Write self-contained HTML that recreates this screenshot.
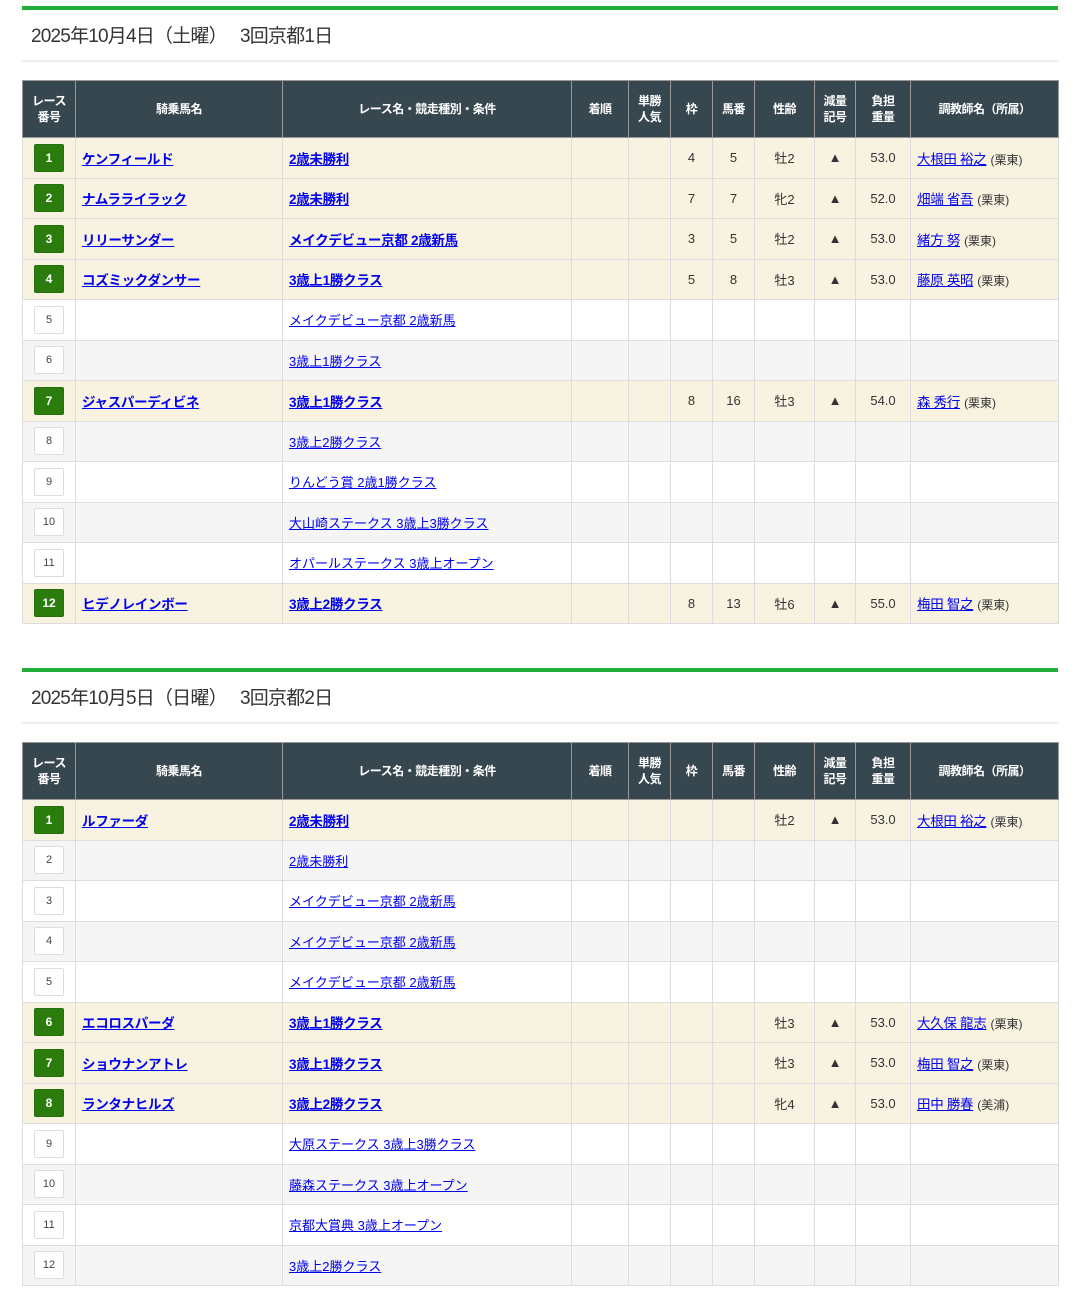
<!DOCTYPE html>
<html><head><meta charset="utf-8"><style>
*{box-sizing:border-box;margin:0;padding:0}
body{width:1080px;height:1292px;background:#fff;font-family:"Liberation Sans","Noto Sans CJK JP",sans-serif;color:#333;overflow:hidden}
.sec{margin:0 22px}
.bar{height:4px;background:#22ac38}
h2{font-size:19px;font-weight:normal;color:#333;height:52px;line-height:54px;padding-left:9px;border-bottom:2px solid #eee;letter-spacing:-0.8px}
table{border-collapse:collapse;width:1036px;table-layout:fixed;margin-top:18px}
th{background:#37474f;color:#fff;font-size:12px;font-weight:bold;height:57px;border:1px solid #999;line-height:16px;letter-spacing:-0.5px}
td{border:1px solid #ddd;height:40.5px;font-size:13px;text-align:center;padding:0}
td.l{text-align:left;padding-left:6px}
a{color:#0000ee;text-decoration:underline;font-size:13px}
tr.h a{font-weight:bold;font-size:13.5px;letter-spacing:-0.3px}
tr.h td{background:#f8f3e0}
tr.g td{background:#f5f5f5}
tr.w td{background:#fff}
.b{display:inline-block;width:30px;height:28px;line-height:26px;border:1px solid #ddd;background:#fff;font-size:11px;border-radius:2px;color:#444}
tr.h .b{background:#2a7d0c;border-color:#276f0e;color:#fff;font-weight:bold;font-size:12px}
.t a{font-size:13px;font-weight:normal!important}
.t span{font-size:12px;margin-left:4px}
</style></head><body>
<div style="height:6px"></div>
<div class="sec"><div class="bar"></div><h2>2025年10月4日（土曜）　 3回京都1日</h2>
<table><colgroup><col style="width:53px"><col style="width:207px"><col style="width:289px"><col style="width:57px"><col style="width:42px"><col style="width:42px"><col style="width:42px"><col style="width:60px"><col style="width:41px"><col style="width:55px"><col style="width:148px"></colgroup>
<tr><th>レース<br>番号</th><th>騎乗馬名</th><th>レース名・競走種別・条件</th><th>着順</th><th>単勝<br>人気</th><th>枠</th><th>馬番</th><th>性齢</th><th>減量<br>記号</th><th>負担<br>重量</th><th>調教師名（所属）</th></tr>
<tr class="h"><td><span class="b">1</span></td><td class="l"><a>ケンフィールド</a></td><td class="l"><a>2歳未勝利</a></td><td></td><td></td><td>4</td><td>5</td><td>牡2</td><td>▲</td><td>53.0</td><td class="l t"><a>大根田 裕之</a><span>(栗東)</span></td></tr>
<tr class="h"><td><span class="b">2</span></td><td class="l"><a>ナムラライラック</a></td><td class="l"><a>2歳未勝利</a></td><td></td><td></td><td>7</td><td>7</td><td>牝2</td><td>▲</td><td>52.0</td><td class="l t"><a>畑端 省吾</a><span>(栗東)</span></td></tr>
<tr class="h"><td><span class="b">3</span></td><td class="l"><a>リリーサンダー</a></td><td class="l"><a>メイクデビュー京都 2歳新馬</a></td><td></td><td></td><td>3</td><td>5</td><td>牡2</td><td>▲</td><td>53.0</td><td class="l t"><a>緒方 努</a><span>(栗東)</span></td></tr>
<tr class="h"><td><span class="b">4</span></td><td class="l"><a>コズミックダンサー</a></td><td class="l"><a>3歳上1勝クラス</a></td><td></td><td></td><td>5</td><td>8</td><td>牡3</td><td>▲</td><td>53.0</td><td class="l t"><a>藤原 英昭</a><span>(栗東)</span></td></tr>
<tr class="w"><td><span class="b">5</span></td><td></td><td class="l"><a>メイクデビュー京都 2歳新馬</a></td><td></td><td></td><td></td><td></td><td></td><td></td><td></td><td></td></tr>
<tr class="g"><td><span class="b">6</span></td><td></td><td class="l"><a>3歳上1勝クラス</a></td><td></td><td></td><td></td><td></td><td></td><td></td><td></td><td></td></tr>
<tr class="h"><td><span class="b">7</span></td><td class="l"><a>ジャスパーディビネ</a></td><td class="l"><a>3歳上1勝クラス</a></td><td></td><td></td><td>8</td><td>16</td><td>牡3</td><td>▲</td><td>54.0</td><td class="l t"><a>森 秀行</a><span>(栗東)</span></td></tr>
<tr class="g"><td><span class="b">8</span></td><td></td><td class="l"><a>3歳上2勝クラス</a></td><td></td><td></td><td></td><td></td><td></td><td></td><td></td><td></td></tr>
<tr class="w"><td><span class="b">9</span></td><td></td><td class="l"><a>りんどう賞 2歳1勝クラス</a></td><td></td><td></td><td></td><td></td><td></td><td></td><td></td><td></td></tr>
<tr class="g"><td><span class="b">10</span></td><td></td><td class="l"><a>大山崎ステークス 3歳上3勝クラス</a></td><td></td><td></td><td></td><td></td><td></td><td></td><td></td><td></td></tr>
<tr class="w"><td><span class="b">11</span></td><td></td><td class="l"><a>オパールステークス 3歳上オープン</a></td><td></td><td></td><td></td><td></td><td></td><td></td><td></td><td></td></tr>
<tr class="h"><td><span class="b">12</span></td><td class="l"><a>ヒデノレインボー</a></td><td class="l"><a>3歳上2勝クラス</a></td><td></td><td></td><td>8</td><td>13</td><td>牡6</td><td>▲</td><td>55.0</td><td class="l t"><a>梅田 智之</a><span>(栗東)</span></td></tr>
</table></div>
<div style="height:44px"></div>
<div class="sec"><div class="bar"></div><h2>2025年10月5日（日曜）　 3回京都2日</h2>
<table><colgroup><col style="width:53px"><col style="width:207px"><col style="width:289px"><col style="width:57px"><col style="width:42px"><col style="width:42px"><col style="width:42px"><col style="width:60px"><col style="width:41px"><col style="width:55px"><col style="width:148px"></colgroup>
<tr><th>レース<br>番号</th><th>騎乗馬名</th><th>レース名・競走種別・条件</th><th>着順</th><th>単勝<br>人気</th><th>枠</th><th>馬番</th><th>性齢</th><th>減量<br>記号</th><th>負担<br>重量</th><th>調教師名（所属）</th></tr>
<tr class="h"><td><span class="b">1</span></td><td class="l"><a>ルファーダ</a></td><td class="l"><a>2歳未勝利</a></td><td></td><td></td><td></td><td></td><td>牡2</td><td>▲</td><td>53.0</td><td class="l t"><a>大根田 裕之</a><span>(栗東)</span></td></tr>
<tr class="g"><td><span class="b">2</span></td><td></td><td class="l"><a>2歳未勝利</a></td><td></td><td></td><td></td><td></td><td></td><td></td><td></td><td></td></tr>
<tr class="w"><td><span class="b">3</span></td><td></td><td class="l"><a>メイクデビュー京都 2歳新馬</a></td><td></td><td></td><td></td><td></td><td></td><td></td><td></td><td></td></tr>
<tr class="g"><td><span class="b">4</span></td><td></td><td class="l"><a>メイクデビュー京都 2歳新馬</a></td><td></td><td></td><td></td><td></td><td></td><td></td><td></td><td></td></tr>
<tr class="w"><td><span class="b">5</span></td><td></td><td class="l"><a>メイクデビュー京都 2歳新馬</a></td><td></td><td></td><td></td><td></td><td></td><td></td><td></td><td></td></tr>
<tr class="h"><td><span class="b">6</span></td><td class="l"><a>エコロスパーダ</a></td><td class="l"><a>3歳上1勝クラス</a></td><td></td><td></td><td></td><td></td><td>牡3</td><td>▲</td><td>53.0</td><td class="l t"><a>大久保 龍志</a><span>(栗東)</span></td></tr>
<tr class="h"><td><span class="b">7</span></td><td class="l"><a>ショウナンアトレ</a></td><td class="l"><a>3歳上1勝クラス</a></td><td></td><td></td><td></td><td></td><td>牡3</td><td>▲</td><td>53.0</td><td class="l t"><a>梅田 智之</a><span>(栗東)</span></td></tr>
<tr class="h"><td><span class="b">8</span></td><td class="l"><a>ランタナヒルズ</a></td><td class="l"><a>3歳上2勝クラス</a></td><td></td><td></td><td></td><td></td><td>牝4</td><td>▲</td><td>53.0</td><td class="l t"><a>田中 勝春</a><span>(美浦)</span></td></tr>
<tr class="w"><td><span class="b">9</span></td><td></td><td class="l"><a>大原ステークス 3歳上3勝クラス</a></td><td></td><td></td><td></td><td></td><td></td><td></td><td></td><td></td></tr>
<tr class="g"><td><span class="b">10</span></td><td></td><td class="l"><a>藤森ステークス 3歳上オープン</a></td><td></td><td></td><td></td><td></td><td></td><td></td><td></td><td></td></tr>
<tr class="w"><td><span class="b">11</span></td><td></td><td class="l"><a>京都大賞典 3歳上オープン</a></td><td></td><td></td><td></td><td></td><td></td><td></td><td></td><td></td></tr>
<tr class="g"><td><span class="b">12</span></td><td></td><td class="l"><a>3歳上2勝クラス</a></td><td></td><td></td><td></td><td></td><td></td><td></td><td></td><td></td></tr>
</table></div>
</body></html>
